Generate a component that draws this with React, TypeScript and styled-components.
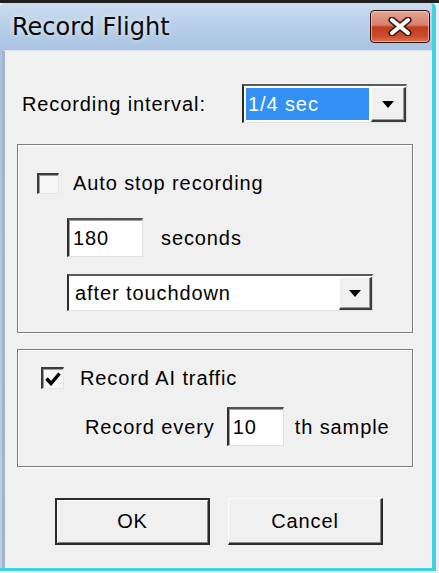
import React from 'react';
import styled, { createGlobalStyle } from 'styled-components';

const GlobalStyle = createGlobalStyle`
  html, body {
    margin: 0;
    padding: 0;
    background: #f4eef0;
  }
  body {
    font-family: "Liberation Sans", Arial, sans-serif;
  }
`;

const Window = styled.div`
  width: 439px;
  height: 573px;
  box-sizing: border-box;
  display: flex;
  flex-direction: column;
  border-top: 3px solid #1f1f1f;
  padding: 0 3px 2px 0;
  background: #f4eef0;
`;

const Frame = styled.div`
  flex: 1;
  display: flex;
  flex-direction: column;
  padding-left: 2px;
  background: linear-gradient(180deg, #cadcf0 0px, #b3cbe6 30px, #a8c3e1 47px, #bccfe5 100%);
  border-right: 4px solid #3fd3e2;
  border-bottom: 3px solid #3fd3e2;
  border-radius: 5px 5px 0 0;
`;

const TitleBar = styled.div`
  height: 47px;
  display: flex;
  align-items: center;
  justify-content: space-between;
  padding: 0 2px 0 10px;
`;

const Title = styled.div`
  font-family: "DejaVu Sans", sans-serif;
  font-size: 24px;
  color: #0a0a0a;
  text-shadow: 0 0 6px rgba(255, 255, 255, 0.8);
`;

const CloseButton = styled.div`
  width: 60px;
  height: 33px;
  box-sizing: border-box;
  border: 1px solid #2c1410;
  border-radius: 4px;
  display: flex;
  align-items: center;
  justify-content: center;
  box-shadow: inset 0 0 0 1px rgba(255, 220, 210, 0.55);
  background: linear-gradient(180deg, #e3a496 0%, #d8806c 45%, #c33c20 52%, #cc4a2c 80%, #dc7450 100%);
`;

const Client = styled.div`
  flex: 1;
  display: flex;
  flex-direction: column;
  background: #f0f0f0;
  border-left: 3px solid #a2b3ca;
  border-top: 1px solid #dfe6ee;
  padding: 33px 19px 0 12px;
  color: #000;
  font-size: 20px;
  letter-spacing: 0.9px;
`;

const IntervalRow = styled.div`
  display: flex;
  align-items: center;
  justify-content: space-between;
  height: 39px;
  padding: 0 6px 0 5px;
`;

const Text = styled.span<{ $ml?: number }>`
  margin-left: ${(p) => p.$ml ?? 0}px;
  white-space: nowrap;
  line-height: 22px;
`;

const Combo = styled.div<{ $w: number; $h: number }>`
  width: ${(p) => p.$w}px;
  height: ${(p) => p.$h}px;
  box-sizing: border-box;
  display: flex;
  background: #fff;
  border-top: 2px solid #5a5a5a;
  border-left: 2px solid #2e2e2e;
  border-right: 1px solid #d8d8d8;
  border-bottom: 1px solid #e2e2e2;
`;

const ComboField = styled.div<{ $selected?: boolean }>`
  flex: 1;
  display: flex;
  align-items: center;
  margin: 2px;
  padding-left: ${(p) => (p.$selected ? 2 : 4)}px;
  background: ${(p) => (p.$selected ? '#3390f4' : '#fff')};
  color: ${(p) => (p.$selected ? '#fff' : '#000')};
`;

const ComboButton = styled.div<{ $w: number }>`
  width: ${(p) => p.$w}px;
  box-sizing: border-box;
  margin: 1px 0 0 0;
  display: flex;
  align-items: center;
  justify-content: center;
  background: #f0f0f0;
  border-top: 1px solid #fafafa;
  border-left: 1px solid #fafafa;
  border-right: 2px solid #3c3c3c;
  border-bottom: 2px solid #3c3c3c;
  box-shadow: inset -1px -1px 0 #9a9a9a;
`;

const Arrow = styled.div`
  width: 0;
  height: 0;
  border-left: 6px solid transparent;
  border-right: 6px solid transparent;
  border-top: 7px solid #000;
`;

const GroupBox = styled.div<{ $pt: number; $pl: number; $pb: number; $mt: number }>`
  margin-top: ${(p) => p.$mt}px;
  border: 1px solid #7c7c7c;
  box-shadow: inset 1px 1px 0 #fff, 1px 1px 0 #fff;
  padding: ${(p) => `${p.$pt}px 0 ${p.$pb}px ${p.$pl}px`};
  display: flex;
  flex-direction: column;
`;

const Row = styled.div<{ $mt?: number; $pl?: number }>`
  display: flex;
  align-items: center;
  margin-top: ${(p) => p.$mt ?? 0}px;
  padding-left: ${(p) => p.$pl ?? 0}px;
`;

const CheckBox = styled.div<{ $size: number }>`
  width: ${(p) => p.$size}px;
  height: ${(p) => p.$size - 1}px;
  box-sizing: border-box;
  background: #f6f6f6;
  border-top: 2px solid #3a3a3a;
  border-left: 2px solid #3a3a3a;
  border-right: 1px solid #e6e6e6;
  border-bottom: 1px solid #e6e6e6;
  box-shadow: inset 1px 1px 0 #9a9a9a;
  display: flex;
  align-items: center;
  justify-content: center;
`;

const Edit = styled.div<{ $w: number; $ml?: number }>`
  width: ${(p) => p.$w}px;
  height: 39px;
  margin-left: ${(p) => p.$ml ?? 0}px;
  box-sizing: border-box;
  display: flex;
  align-items: center;
  padding-left: 4px;
  background: #fff;
  border-top: 2px solid #505050;
  border-left: 2px solid #2e2e2e;
  border-right: 1px solid #e0e0e0;
  border-bottom: 1px solid #e0e0e0;
  box-shadow: inset 1px 1px 0 #a0a0a0;
`;

const ButtonRow = styled.div`
  display: flex;
  gap: 18px;
  margin-top: 31px;
  padding-left: 38px;
`;

const PushButton = styled.div<{ $default?: boolean }>`
  width: 155px;
  height: 47px;
  box-sizing: border-box;
  display: flex;
  align-items: center;
  justify-content: center;
  background: #f0f0f0;
  border-top: ${(p) => (p.$default ? '2px solid #2a2a2a' : '1px solid #fbfbfb')};
  border-left: ${(p) => (p.$default ? '2px solid #2a2a2a' : '1px solid #fbfbfb')};
  border-right: 2px solid #2a2a2a;
  border-bottom: 2px solid #2a2a2a;
  box-shadow: ${(p) =>
    p.$default
      ? 'inset 1px 1px 0 #fff, inset -1px -1px 0 #808080'
      : 'inset -1px -1px 0 #8a8a8a'};
`;

const CloseGlyph = () => (
  <svg width="26" height="19" viewBox="0 0 26 19">
    <path d="M5 3 L21 16 M21 3 L5 16" stroke="#3a1a12" strokeWidth="7" strokeLinecap="round" />
    <path d="M5 3 L21 16 M21 3 L5 16" stroke="#ffffff" strokeWidth="4" strokeLinecap="round" />
  </svg>
);

const CheckMark = () => (
  <svg width="16" height="14" viewBox="0 0 16 14">
    <path d="M1.5 6.5 L6 11.5 L14.5 1.5" stroke="#000" strokeWidth="3.4" fill="none" />
  </svg>
);

export default function App() {
  return (
    <>
      <GlobalStyle />
      <Window>
        <Frame>
          <TitleBar>
            <Title>Record Flight</Title>
            <CloseButton>
              <CloseGlyph />
            </CloseButton>
          </TitleBar>
          <Client>
            <IntervalRow>
              <Text>Recording interval:</Text>
              <Combo $w={165} $h={39}>
                <ComboField $selected>1/4 sec</ComboField>
                <ComboButton $w={35}>
                  <Arrow />
                </ComboButton>
              </Combo>
            </IntervalRow>

            <GroupBox $mt={21} $pt={27} $pl={19} $pb={21}>
              <Row>
                <CheckBox $size={22} />
                <Text $ml={14}>Auto stop recording</Text>
              </Row>
              <Row $mt={24} $pl={30}>
                <Edit $w={76}>180</Edit>
                <Text $ml={18}>seconds</Text>
              </Row>
              <Row $mt={17} $pl={30}>
                <Combo $w={306} $h={37}>
                  <ComboField>after touchdown</ComboField>
                  <ComboButton $w={33}>
                    <Arrow />
                  </ComboButton>
                </Combo>
              </Row>
            </GroupBox>

            <GroupBox $mt={16} $pt={17} $pl={23} $pb={20}>
              <Row>
                <CheckBox $size={23}>
                  <CheckMark />
                </CheckBox>
                <Text $ml={16}>Record AI traffic</Text>
              </Row>
              <Row $mt={18} $pl={44}>
                <Text>Record every</Text>
                <Edit $w={57} $ml={12}>10</Edit>
                <Text $ml={11}>th sample</Text>
              </Row>
            </GroupBox>

            <ButtonRow>
              <PushButton $default>OK</PushButton>
              <PushButton>Cancel</PushButton>
            </ButtonRow>
          </Client>
        </Frame>
      </Window>
    </>
  );
}
